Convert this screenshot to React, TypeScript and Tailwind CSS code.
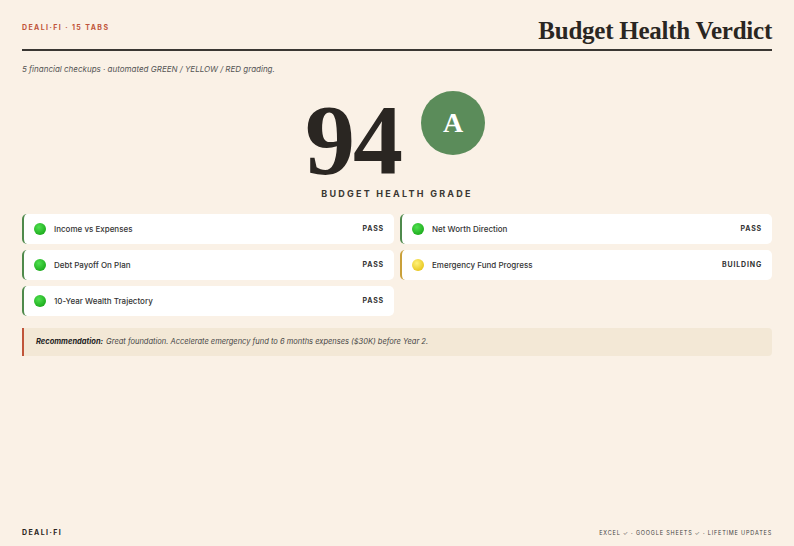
export default function App() {
  const rows: [string, string, boolean][] = [
    ["Income vs Expenses", "PASS", true],
    ["Net Worth Direction", "PASS", true],
    ["Debt Payoff On Plan", "PASS", true],
    ["Emergency Fund Progress", "BUILDING", false],
    ["10-Year Wealth Trajectory", "PASS", true],
  ];
  return (
    <div className="w-[794px] h-[546px] bg-[#faf1e6] px-[22px] flex flex-col text-[#2a2622]" style={{ fontFamily: "Inter, 'Liberation Sans', sans-serif" }}>
      <div className="flex items-end justify-between pt-[18px] pb-[6px] border-b-2 border-[#3a3733]">
        <div className="text-[7px] font-bold tracking-[0.2em] text-[#c0553a] pb-[10px]">DEALI·FI · 15 TABS</div>
        <div className="text-[25px] font-bold leading-none tracking-[-0.01em]" style={{ fontFamily: "'Liberation Serif', serif" }}>Budget Health Verdict</div>
      </div>
      <div className="text-[8px] italic text-[#555] mt-[12px]">5 financial checkups · automated GREEN / YELLOW / RED grading.</div>
      <div className="flex justify-center items-start gap-[20px] mt-[16px] ml-[-4px]">
        <div className="text-[100px] font-bold leading-[90px] tracking-[-0.02em] mt-[4px]" style={{ fontFamily: "'Liberation Serif', serif" }}>94</div>
        <div className="w-[64px] h-[64px] rounded-full bg-[#5b8c5a] flex items-center justify-center text-white text-[28px] font-bold" style={{ fontFamily: "'Liberation Serif', serif" }}>A</div>
      </div>
      <div className="text-center text-[9px] font-bold tracking-[0.25em] mt-[2px] text-[#3a3733]">BUDGET HEALTH GRADE</div>
      <div className="grid grid-cols-2 gap-x-[6px] gap-y-[6px] mt-[13px]">
        {rows.map(([l, s, ok]) => (
          <div key={l} className={`h-[30px] bg-white rounded-[5px] border-l-2 ${ok ? "border-[#4f8a4c]" : "border-[#c9a03a]"} flex items-center px-[10px] leading-none`}>
            <span className={`w-[12px] h-[12px] rounded-full ${ok ? "bg-[radial-gradient(circle_at_40%_35%,#4fe04f,#0d9a0d)]" : "bg-[radial-gradient(circle_at_40%_35%,#fff27a,#e0b800)]"}`} />
            <span className="ml-[8px] text-[8px] font-medium text-[#333] leading-none">{l}</span>
            <span className="ml-auto text-[7px] font-bold tracking-[0.12em] text-[#333] leading-none">{s}</span>
          </div>
        ))}
      </div>
      <div className="mt-[12px] h-[28px] bg-[#f3e8d6] border-l-2 border-[#c0553a] rounded-r-[4px] flex items-center px-[12px] text-[7.5px] italic text-[#444]">
        <b className="text-[#222] mr-[3px]">Recommendation:</b> Great foundation. Accelerate emergency fund to 6 months expenses ($30K) before Year 2.
      </div>
      <div className="mt-auto mb-[8px] flex justify-between items-center">
        <div className="text-[7px] font-bold tracking-[0.2em]">DEALI·FI</div>
        <div className="text-[5.5px] tracking-[0.15em] text-[#444]">EXCEL ✓ · GOOGLE SHEETS ✓ · LIFETIME UPDATES</div>
      </div>
    </div>
  );
}
